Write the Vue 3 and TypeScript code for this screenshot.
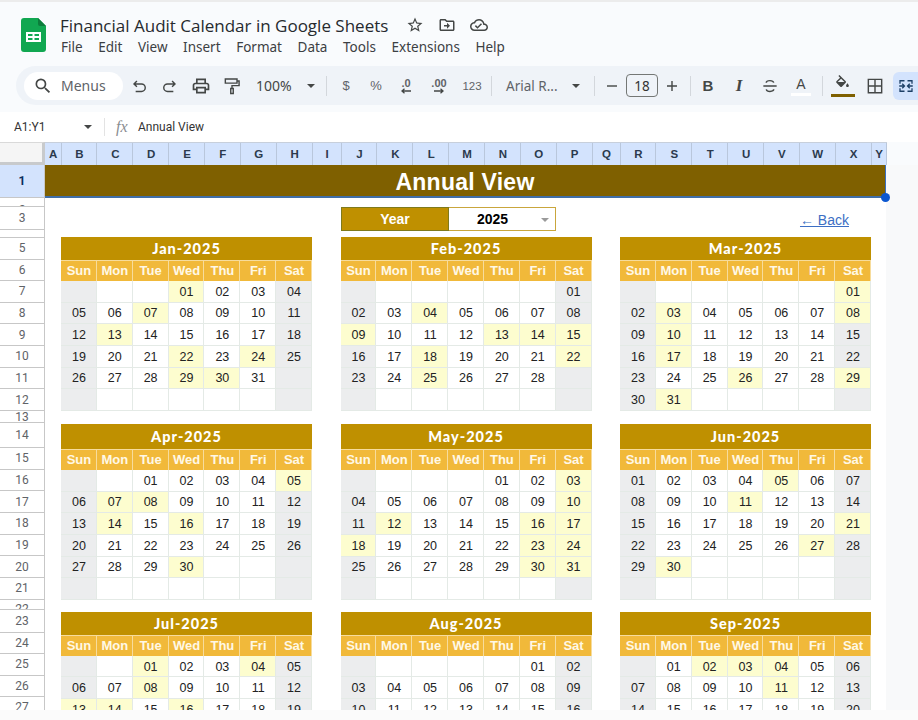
<script setup lang="ts">
interface DayCell {
  label: string
  weekend: boolean
  marked: boolean
}

const columns = 'ABCDEFGHIJKLMNOPQRSTUVWXY'.split('')
const weekdays = ['Sun', 'Mon', 'Tue', 'Wed', 'Thu', 'Fri', 'Sat']
const monthNames = ['Jan', 'Feb', 'Mar', 'Apr', 'May', 'Jun', 'Jul', 'Aug', 'Sep']
const menus = ['File', 'Edit', 'View', 'Insert', 'Format', 'Data', 'Tools', 'Extensions', 'Help']

// audit days per month, read off the sheet
const auditDays: number[][] = [
  [1, 7, 13, 22, 24, 29, 30],
  [4, 9, 13, 14, 15, 18, 22, 25],
  [1, 3, 8, 10, 17, 26, 29, 31],
  [5, 7, 8, 14, 16, 30],
  [3, 10, 12, 16, 17, 18, 23, 24, 30, 31],
  [5, 11, 21, 27, 30],
  [1, 4, 8, 13, 14, 16],
  [],
  [2, 3, 4, 11]
]

const rowHeads = Array.from({ length: 27 }, (_, i) => i + 1)

function rowClass(n: number) {
  return {
    selected: n === 1,
    tiny: n === 2 || n === 4,
    short: n === 22
  }
}

function buildCells(month: number): DayCell[] {
  const first = new Date(2025, month, 1).getDay()
  const total = new Date(2025, month + 1, 0).getDate()
  const cells: DayCell[] = []
  // the last three months run off the bottom of the window after three weeks
  const count = month > 5 ? 21 : 42
  for (let i = 0; i < count; i++) {
    const day = i - first + 1
    const inMonth = day >= 1 && day <= total
    const col = i % 7
    cells.push({
      label: inMonth ? String(day).padStart(2, '0') : '',
      weekend: col === 0 || col === 6,
      marked: inMonth && auditDays[month].includes(day)
    })
  }
  return cells
}

const months = monthNames.map((name, i) => ({
  title: `${name}-2025`,
  cells: buildCells(i)
}))
</script>

<template>
  <div class="app">
    <header class="titlebar">
      <svg class="logo" viewBox="0 0 25 34" width="25" height="34">
        <path d="M3 0h14l8 8v23a3 3 0 0 1-3 3H3a3 3 0 0 1-3-3V3a3 3 0 0 1 3-3z" fill="#11a751" />
        <path d="M17 0l8 8h-6a2 2 0 0 1-2-2z" fill="#0c7d3c" />
        <path d="M5 14h15v10H5z M7 16v2h4.500v-2z M13.500 16v2H18v-2z M7 20v2h4.500v-2z M13.500 20v2H18v-2z" fill="#fff" fill-rule="evenodd" />
      </svg>
      <div class="doc">
        <div class="doc-top">
          <span class="doc-name">Financial Audit Calendar in Google Sheets</span>
          <svg class="doc-icon" viewBox="0 0 24 24"><path d="M22 9.240l-7.190-.62L12 2 9.190 8.630 2 9.240l5.460 4.730L5.820 21 12 17.270 18.180 21l-1.630-7.030L22 9.240zM12 15.400l-3.760 2.270 1-4.280-3.320-2.880 4.380-.38L12 6.100l1.710 4.040 4.380.38-3.320 2.880 1 4.280L12 15.400z" /></svg>
          <svg class="doc-icon" viewBox="0 0 24 24"><path d="M20 6h-8l-2-2H4c-1.100 0-2 .9-2 2v12c0 1.100.9 2 2 2h16c1.100 0 2-.9 2-2V8c0-1.100-.9-2-2-2zm0 12H4V6h5.170l2 2H20v10zm-8-1l4-4-4-4v3H8v2h4v3z" /></svg>
          <svg class="doc-icon" viewBox="0 0 24 24"><path d="M19.350 10.040C18.670 6.590 15.640 4 12 4 9.110 4 6.600 5.640 5.350 8.040 2.340 8.360 0 10.910 0 14c0 3.310 2.690 6 6 6h13c2.760 0 5-2.240 5-5 0-2.640-2.050-4.780-4.650-4.960zM19 18H6c-2.210 0-4-1.790-4-4 0-2.050 1.530-3.760 3.560-3.970l1.070-.11.5-.95C8.080 7.140 9.940 6 12 6c2.620 0 4.880 1.860 5.390 4.430l.3 1.500 1.530.11c1.560.1 2.780 1.410 2.780 2.960 0 1.650-1.350 3-3 3zm-9-3.820l-2.090-2.090L6.500 13.500 10 17l6.010-6.010-1.410-1.410z" /></svg>
        </div>
        <nav class="menus">
          <span v-for="m in menus" :key="m">{{ m }}</span>
        </nav>
      </div>
    </header>

    <div class="toolbar">
      <div class="search">
        <svg viewBox="0 0 24 24" width="20" height="20"><path d="M15.500 14h-.79l-.28-.27A6.470 6.470 0 0 0 16 9.500 6.500 6.500 0 1 0 9.500 16c1.610 0 3.090-.59 4.230-1.570l.27.28v.79l5 4.990L20.490 19l-4.990-5zm-6 0C7.010 14 5 11.990 5 9.500S7.010 5 9.500 5 14 7.010 14 9.500 11.990 14 9.500 14z" /></svg>
        <span>Menus</span>
      </div>
      <button class="tool">
        <svg class="line" viewBox="0 0 24 24"><path d="M9.500 6L6 9.500l3.500 3.500M6 9.500h9a4.500 4.500 0 0 1 0 9H8" /></svg>
      </button>
      <button class="tool">
        <svg class="line" viewBox="0 0 24 24"><path d="M14.500 6L18 9.500 14.500 13M18 9.500H9a4.500 4.500 0 0 0 0 9h7" /></svg>
      </button>
      <button class="tool">
        <svg viewBox="0 0 24 24"><path d="M19 8h-1V3H6v5H5c-1.660 0-3 1.340-3 3v6h4v4h12v-4h4v-6c0-1.660-1.340-3-3-3zM8 5h8v3H8V5zm8 12v2H8v-4h8v2zm2-2v-2H6v2H4v-4c0-.55.45-1 1-1h14c.55 0 1 .45 1 1v4h-2z" /></svg>
      </button>
      <button class="tool">
        <svg class="line" viewBox="0 0 24 24"><path d="M4 3.500h14v5H4zM18 6h2.500v5.500h-8.500V15M10.500 15h3v6h-3z" /></svg>
      </button>
      <div class="zoom-select">
        <span>100%</span>
        <i class="caret"></i>
      </div>
      <i class="divider"></i>
      <button class="tool text">$</button>
      <button class="tool text">%</button>
      <button class="tool decimal">
        <span>.0</span>
        <svg class="line arrow" viewBox="0 0 12 6"><path d="M11 3H2M4.500 .8L2 3l2.500 2.200" /></svg>
      </button>
      <button class="tool decimal wide">
        <span>.00</span>
        <svg class="line arrow" viewBox="0 0 12 6"><path d="M1 3h9M7.500 .8L10 3 7.500 5.200" /></svg>
      </button>
      <button class="tool text small">123</button>
      <i class="divider after-num"></i>
      <div class="font-select">
        <span>Arial R...</span>
        <i class="caret"></i>
      </div>
      <i class="divider after-font"></i>
      <button class="tool size-btn">
        <svg class="line" viewBox="0 0 24 24"><path d="M6 12h12" /></svg>
      </button>
      <div class="size-box">18</div>
      <button class="tool size-btn">
        <svg class="line" viewBox="0 0 24 24"><path d="M6 12h12M12 6v12" /></svg>
      </button>
      <i class="divider after-size"></i>
      <button class="tool bold">B</button>
      <button class="tool italic">I</button>
      <button class="tool">
        <svg class="line" viewBox="0 0 24 24"><path d="M4 12h16M16.500 8C16 6 14.300 5.500 12 5.500S7.500 6.500 7.500 8M7.500 16c.5 2 2.200 2.500 4.500 2.500s4.500-1 4.500-2.500" /></svg>
      </button>
      <button class="tool text-color">
        <span>A</span>
        <i></i>
      </button>
      <i class="divider after-color"></i>
      <button class="tool fill">
        <svg viewBox="0 0 24 24"><path d="M16.560 8.940L7.620 0 6.210 1.410l2.380 2.380-5.150 5.150c-.59.59-.59 1.540 0 2.120l5.500 5.500c.29.29.68.44 1.060.44s.77-.15 1.060-.44l5.500-5.500c.59-.58.59-1.530 0-2.120zM5.210 10L10 5.210 14.790 10H5.210zM19 11.500s-2 2.170-2 3.500c0 1.100.9 2 2 2s2-.9 2-2c0-1.330-2-3.500-2-3.500z" /></svg>
        <i></i>
      </button>
      <button class="tool grid-btn">
        <svg class="line" viewBox="0 0 24 24"><path d="M4 4h16v16H4zM12 4v16M4 12h16" /></svg>
      </button>
      <button class="tool merge">
        <svg class="line" viewBox="0 0 24 24"><path d="M10 5H4v4M4 15v4h6M3 12h6M7 9l3 3-3 3M14 5h6v4M20 15v4h-6M21 12h-6M17 9l-3 3 3 3" /></svg>
      </button>
    </div>

    <div class="formula">
      <span class="range">A1:Y1</span>
      <i class="caret"></i>
      <i class="formula-sep"></i>
      <span class="fx">fx</span>
      <span class="value">Annual View</span>
    </div>

    <div class="col-row">
      <div class="corner"></div>
      <div class="col-heads">
        <div v-for="c in columns" :key="c" class="col-head">{{ c }}</div>
      </div>
    </div>

    <div class="sheet">
      <div class="row-heads">
        <div v-for="n in rowHeads" :key="n" class="row-head" :class="rowClass(n)">{{ n }}</div>
      </div>
      <main class="canvas">
        <div class="banner">Annual View</div>
        <div class="year-row">
          <div class="year-label">Year</div>
          <div class="year-select">
            <span>2025</span>
            <i class="caret"></i>
          </div>
          <a class="back" href="#">← Back</a>
        </div>
        <div class="months">
          <section v-for="month in months" :key="month.title" class="month">
            <h2 class="month-title">{{ month.title }}</h2>
            <div class="week">
              <div v-for="d in weekdays" :key="d" class="week-day">{{ d }}</div>
            </div>
            <div class="days">
              <div
                v-for="(cell, i) in month.cells"
                :key="i"
                class="day"
                :class="{ weekend: cell.weekend, marked: cell.marked }"
              >{{ cell.label }}</div>
            </div>
          </section>
        </div>
        <span class="handle"></span>
      </main>
      <div class="gutter"></div>
    </div>

    <div class="bottom-strip"></div>
  </div>
</template>

<style>
html,
body {
  margin: 0;
  background: #fff;
}
</style>

<style scoped>
.app {
  width: 918px;
  height: 720px;
  overflow: hidden;
  display: flex;
  flex-direction: column;
  background: #f9fbfd;
  font-family: "Liberation Sans", Arial, sans-serif;
  color: #444746;
}

.titlebar {
  height: 66px;
  flex: none;
  box-sizing: border-box;
  border-top: 2px solid #ececec;
  padding: 16px 0 0 21px;
  display: flex;
  gap: 14px;
}

.logo {
  flex: none;
}

.doc {
  display: flex;
  flex-direction: column;
}

.doc-top {
  height: 20px;
  margin-top: -3px;
  display: flex;
  align-items: center;
}

.doc-name {
  font-family: "Open Sans", sans-serif;
  font-size: 17px;
  color: #262a2e;
  margin-right: 18px;
}

.doc-icon {
  width: 18px;
  height: 18px;
  fill: #444746;
  margin-right: 14px;
}

.menus {
  margin-top: 2px;
  display: flex;
  gap: 15.600px;
  font-family: "Noto Sans", sans-serif;
  font-size: 13.500px;
  line-height: 20px;
  color: #3c4043;
  padding-left: 1px;
}

.toolbar {
  height: 39px;
  flex: none;
  margin: 0 0 7px 16px;
  padding-left: 8px;
  border-radius: 20px 0 0 20px;
  background: #eff3f8;
  display: flex;
  align-items: center;
}

.search {
  width: 99px;
  height: 28px;
  flex: none;
  box-sizing: border-box;
  padding-left: 9px;
  background: #fff;
  border-radius: 14px;
  display: flex;
  align-items: center;
  gap: 8px;
  font-family: "Noto Sans", sans-serif;
  font-size: 14px;
  color: #5f6368;
}

.search svg {
  fill: #444746;
}

.tool {
  width: 31px;
  height: 28px;
  flex: none;
  padding: 0;
  border: none;
  background: none;
  display: flex;
  align-items: center;
  justify-content: center;
  font-family: inherit;
  color: #444746;
}

.tool svg {
  width: 20px;
  height: 20px;
  fill: #444746;
}

.tool svg.line {
  fill: none;
  stroke: #444746;
  stroke-width: 1.700;
}

.tool.text {
  width: 30px;
  font-size: 13px;
  color: #5f6368;
}

.tool.small {
  font-size: 11.500px;
  width: 30px;
}

.tool.decimal {
  width: 30px;
  flex-direction: column;
  font-size: 11px;
  font-weight: 700;
  line-height: 10px;
  color: #5f6368;
}

.tool.decimal.wide {
  width: 36px;
}

.tool svg.arrow {
  width: 12px;
  height: 6px;
  stroke-width: 1.300;
}

.zoom-select {
  width: 72px;
  flex: none;
  box-sizing: border-box;
  padding-left: 9px;
  display: flex;
  align-items: center;
  font-family: "Noto Sans", sans-serif;
  font-size: 14px;
  color: #444746;
}

.zoom-select .caret {
  margin-left: 15px;
}

.caret {
  display: block;
  width: 0;
  height: 0;
  border-left: 4px solid transparent;
  border-right: 4px solid transparent;
  border-top: 4px solid #444746;
}

.divider {
  width: 1px;
  height: 20px;
  flex: none;
  margin: 0 4px 0 7px;
  background: #d3d7dc;
}

.divider.after-num {
  margin: 0 0 0 4px;
}

.divider.after-font {
  margin: 0 3px 0 0;
}

.divider.after-size {
  margin: 0 1.500px 0 4px;
}

.divider.after-color {
  margin: 0 4.500px 0 5px;
}

.font-select {
  width: 102px;
  flex: none;
  box-sizing: border-box;
  padding-left: 14px;
  display: flex;
  align-items: center;
  font-family: "Noto Sans", sans-serif;
  font-size: 13.500px;
  color: #5f6368;
}

.font-select .caret {
  margin-left: 14px;
}

.tool.size-btn {
  width: 28px;
}

.size-box {
  width: 32px;
  height: 23px;
  flex: none;
  box-sizing: border-box;
  border: 1px solid #747775;
  border-radius: 4px;
  display: flex;
  align-items: center;
  justify-content: center;
  font-family: "Noto Sans", sans-serif;
  font-size: 13.500px;
  color: #333;
}

.tool.bold {
  font-weight: 700;
  font-size: 15px;
}

.tool.italic {
  font-family: "Liberation Serif", serif;
  font-style: italic;
  font-weight: 700;
  font-size: 17px;
}

.tool.text-color {
  flex-direction: column;
  font-size: 14px;
}

.tool.text-color i {
  width: 20px;
  height: 3px;
  background: #fff;
  margin-top: 1px;
}

.tool.fill {
  flex-direction: column;
  height: 30px;
}

.tool.fill svg {
  width: 17px;
  height: 17px;
}

.tool.fill i {
  width: 24px;
  height: 3px;
  margin-top: 2px;
  background: #7f6000;
}

.tool.grid-btn {
  margin-left: 1px;
}

.tool.merge {
  width: 27px;
  margin-left: 2.500px;
  border-radius: 6px 0 0 6px;
  background: #d3e3fd;
}

.tool.merge svg.line {
  stroke: #1c3f66;
  width: 18px;
  height: 18px;
}

.formula {
  height: 29.500px;
  flex: none;
  box-sizing: border-box;
  background: #fff;
  display: flex;
  align-items: center;
  font-family: "Roboto", sans-serif;
  font-size: 12px;
  color: #333;
}

.range {
  width: 70px;
  padding-left: 14px;
}

.formula-sep {
  width: 1px;
  height: 18px;
  background: #e3e3e3;
  margin: 0 11px 0 12px;
}

.fx {
  width: 22px;
  font-family: "Liberation Serif", serif;
  font-style: italic;
  font-size: 16px;
  color: #8a8d91;
}

.col-row {
  height: 23.500px;
  flex: none;
  display: flex;
}

.corner {
  width: 45px;
  flex: none;
  box-sizing: border-box;
  background: #f5f5f5;
  border-top: 1px solid #d9d9d9;
  border-right: 3px solid #c8cacc;
  border-bottom: 3px solid #c8cacc;
}

.col-heads {
  display: grid;
  grid-template-columns: 16.500px repeat(7, 35.860px) 29px repeat(7, 35.860px) 28px repeat(7, 35.860px) 15px;
}

.col-head {
  box-sizing: border-box;
  background: #d3e3fd;
  border-top: 1px solid #c7cfdb;
  box-shadow: inset -1px 0 0 #b9c7dc;
  display: flex;
  align-items: center;
  justify-content: center;
  font-size: 11.500px;
  font-weight: 700;
  color: #2b3a4d;
}

.sheet {
  flex: 1;
  min-height: 0;
  display: flex;
  overflow: hidden;
}

.row-heads {
  width: 45px;
  flex: none;
  display: grid;
  align-content: start;
  grid-template-rows: 33px 9px 22.500px 8px 22.500px 21px repeat(6, 21.670px) 12.500px 24.700px 21.500px repeat(6, 21.670px) 10px 23px 21px 22px 21px 21px;
  background: #fff;
  border-right: 1px solid #c7c7c7;
  box-sizing: border-box;
}

.row-head {
  box-sizing: border-box;
  overflow: hidden;
  border-bottom: 1px solid #c7c7c7;
  display: flex;
  align-items: center;
  justify-content: center;
  font-family: "Roboto", sans-serif;
  font-size: 12px;
  line-height: 14px;
  color: #5f6368;
}

.row-head.selected {
  background: #d3e3fd;
  color: #0b2d5e;
  font-weight: 700;
}

.row-head.tiny {
  align-items: flex-start;
  padding-top: 5px;
}

.row-head.short {
  align-items: flex-start;
  padding-top: 2px;
}

.canvas {
  width: 841px;
  flex: none;
  position: relative;
  background: #fff;
}

.banner {
  height: 33px;
  box-sizing: border-box;
  padding-top: 3px;
  background: #7f6000;
  border-right: 1px solid #3a6fc0;
  border-bottom: 2px solid #3f6ea8;
  display: flex;
  align-items: center;
  justify-content: center;
  font-size: 23px;
  font-weight: 700;
  letter-spacing: .25px;
  color: #fff;
}

.handle {
  position: absolute;
  left: 835.500px;
  top: 27.500px;
  width: 9px;
  height: 9px;
  border-radius: 50%;
  background: #0b57d0;
}

.year-row {
  height: 24px;
  margin-top: 8.500px;
  padding-left: 296px;
  padding-right: 37px;
  display: flex;
  align-items: stretch;
}

.year-label {
  width: 108px;
  box-sizing: border-box;
  background: #bf9000;
  border: 1px solid #7f7a1c;
  display: flex;
  align-items: center;
  justify-content: center;
  font-size: 14px;
  font-weight: 700;
  color: #fff;
}

.year-select {
  width: 107px;
  box-sizing: border-box;
  position: relative;
  background: #fff;
  border: 1px solid #c9a63c;
  border-left: none;
  padding-right: 19px;
  display: flex;
  align-items: center;
  justify-content: center;
  font-size: 14px;
  font-weight: 700;
  color: #000;
}

.year-select .caret {
  position: absolute;
  right: 6px;
  top: 10px;
  border-top-color: #9a9a9a;
}

.back {
  margin-left: auto;
  margin-top: 5px;
  font-size: 14px;
  color: #3d6fc4;
}

.months {
  margin-top: 6.500px;
  padding-left: 16px;
  display: grid;
  grid-template-columns: repeat(3, 251px);
  column-gap: 28.500px;
  grid-template-rows: 187px 187.700px auto;
}

.month {
  align-self: start;
}

.month-title {
  margin: 0;
  height: 23px;
  background: #bf9000;
  display: flex;
  align-items: center;
  justify-content: center;
  font-family: "Lato", sans-serif;
  font-size: 14.500px;
  font-weight: 900;
  letter-spacing: 1px;
  color: #fff;
}

.month:nth-child(n+4):nth-child(-n+6) .month-title {
  height: 25px;
}

.week {
  height: 21px;
  display: grid;
  grid-template-columns: repeat(7, 1fr);
}

.week-day {
  box-sizing: border-box;
  background: #f1b93a;
  box-shadow: inset -1px 1px 0 #f7dc9c;
  display: flex;
  align-items: center;
  justify-content: center;
  font-size: 13px;
  font-weight: 700;
  color: #fff8e6;
}

.days {
  display: grid;
  grid-template-columns: repeat(7, 1fr);
  grid-auto-rows: 21.670px;
}

.day {
  box-sizing: border-box;
  box-shadow: inset -1px -1px 0 #e4eae6;
  display: flex;
  align-items: center;
  justify-content: center;
  font-size: 12.500px;
  color: #222;
  background: #fff;
}

.day.weekend {
  background: #ecedee;
}

.day.marked {
  background: #fdfdcf;
}

.gutter {
  flex: 1;
  background: #f8f9fa;
}

.bottom-strip {
  height: 10px;
  flex: none;
  background: #fbfbfb;
}
</style>
